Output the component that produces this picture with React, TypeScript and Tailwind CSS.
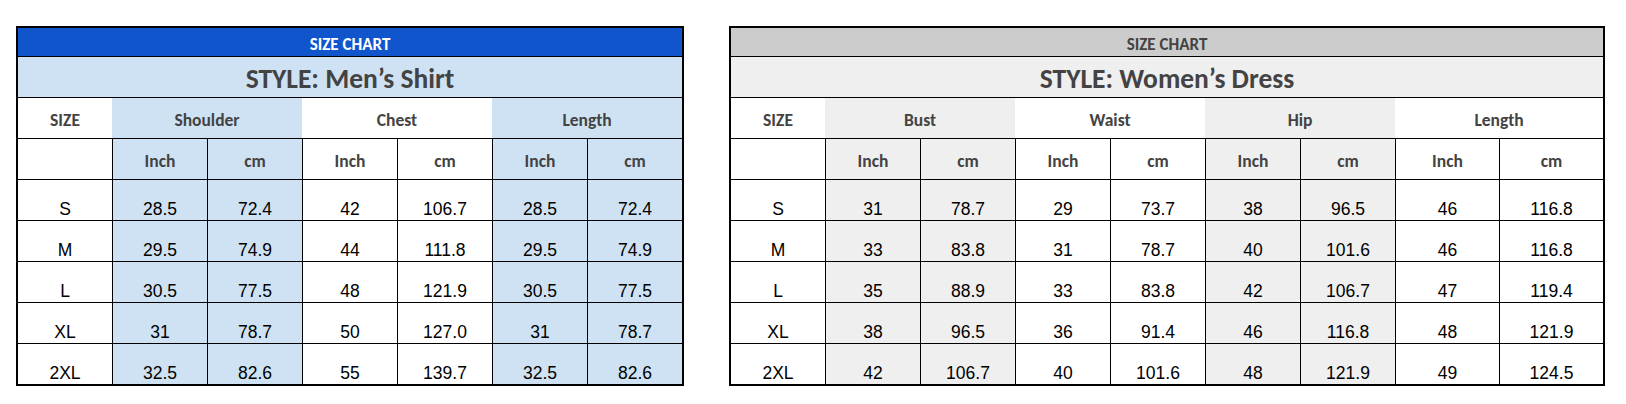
const HEAD_FONT = "font-['Carlito','Lato','Open_Sans',sans-serif]";
const DATA_FONT = "font-['Liberation_Sans',Arial,sans-serif]";

type Group = { label: string; shaded: boolean; wide?: boolean };

type ChartProps = {
  title: string;
  bandClass: string;
  bandText: string;
  styleRowClass: string;
  shadeClass: string;
  groups: Group[];
  rows: (string | number)[][];
};

const sizes = ["S", "M", "L", "XL", "2XL"];

function Chart({ title, bandClass, bandText, styleRowClass, shadeClass, groups, rows }: ChartProps) {
  // one entry per data column: shaded / wide
  const cols = groups.flatMap((g) => [g, g]);

  return (
    <div className="border-2 border-black bg-white">
      <div className={`h-[29px] border-b border-black flex items-center justify-center pt-[4px] leading-none ${bandClass}`}>
        <span className={`${HEAD_FONT} font-bold text-[17px] ${bandText}`}>SIZE CHART</span>
      </div>
      <div className={`h-[41px] border-b border-black flex items-center justify-center pt-[3px] leading-none ${styleRowClass}`}>
        <span className={`${HEAD_FONT} font-bold text-[27.5px] text-[#434343]`}>STYLE: {title}</span>
      </div>

      {/* group header row, no vertical rules */}
      <div className="flex h-[41px] border-b border-black leading-none">
        <div className={`w-[94px] flex items-center justify-center pt-[6px] ${HEAD_FONT} font-bold text-[17.5px] text-[#434343]`}>SIZE</div>
        {groups.map((g) => (
          <div
            key={g.label}
            className={`${g.wide ? "w-[208px]" : "w-[190px]"} flex items-center justify-center pt-[6px] ${HEAD_FONT} font-bold text-[17.5px] text-[#434343] ${g.shaded ? shadeClass : ""}`}
          >
            {g.label}
          </div>
        ))}
      </div>

      {/* unit row */}
      <div className="flex h-[41px] border-b border-black leading-none">
        <div className="w-[94px]" />
        {cols.map((c, i) => (
          <div
            key={i}
            className={`${c.wide ? "w-[104px]" : "w-[95px]"} border-l border-black flex items-center justify-center pt-[6px] ${HEAD_FONT} font-bold text-[17.5px] text-[#434343] ${c.shaded ? shadeClass : ""}`}
          >
            {i % 2 === 0 ? "Inch" : "cm"}
          </div>
        ))}
      </div>

      {rows.map((r, ri) => (
        <div key={ri} className={`flex leading-none ${ri === rows.length - 1 ? "h-[40px]" : "h-[41px] border-b border-black"}`}>
          <div className={`w-[94px] flex items-end justify-center pb-[2px] ${DATA_FONT} text-[17.5px] text-black`}>{sizes[ri]}</div>
          {r.map((v, ci) => (
            <div
              key={ci}
              className={`${cols[ci].wide ? "w-[104px]" : "w-[95px]"} border-l border-black flex items-end justify-center pb-[2px] ${DATA_FONT} text-[17.5px] text-black ${cols[ci].shaded ? shadeClass : ""}`}
            >
              {v}
            </div>
          ))}
        </div>
      ))}
    </div>
  );
}

const menRows = [
  ["28.5", "72.4", "42", "106.7", "28.5", "72.4"],
  ["29.5", "74.9", "44", "111.8", "29.5", "74.9"],
  ["30.5", "77.5", "48", "121.9", "30.5", "77.5"],
  ["31", "78.7", "50", "127.0", "31", "78.7"],
  ["32.5", "82.6", "55", "139.7", "32.5", "82.6"],
];

const womenRows = [
  ["31", "78.7", "29", "73.7", "38", "96.5", "46", "116.8"],
  ["33", "83.8", "31", "78.7", "40", "101.6", "46", "116.8"],
  ["35", "88.9", "33", "83.8", "42", "106.7", "47", "119.4"],
  ["38", "96.5", "36", "91.4", "46", "116.8", "48", "121.9"],
  ["42", "106.7", "40", "101.6", "48", "121.9", "49", "124.5"],
];

export default function App() {
  return (
    <div className="w-[1626px] h-[404px] bg-white flex items-start gap-[45px] pl-[16px] pt-[26px]">
      <Chart
        title="Men’s Shirt"
        bandClass="bg-[#1155cc]"
        bandText="text-white"
        styleRowClass="bg-[#cfe2f3]"
        shadeClass="bg-[#cfe2f3]"
        groups={[
          { label: "Shoulder", shaded: true },
          { label: "Chest", shaded: false },
          { label: "Length", shaded: true },
        ]}
        rows={menRows}
      />
      <Chart
        title="Women’s Dress"
        bandClass="bg-[#cccccc]"
        bandText="text-[#434343]"
        styleRowClass="bg-[#efefef]"
        shadeClass="bg-[#efefef]"
        groups={[
          { label: "Bust", shaded: true },
          { label: "Waist", shaded: false },
          { label: "Hip", shaded: true },
          { label: "Length", shaded: false, wide: true },
        ]}
        rows={womenRows}
      />
    </div>
  );
}
